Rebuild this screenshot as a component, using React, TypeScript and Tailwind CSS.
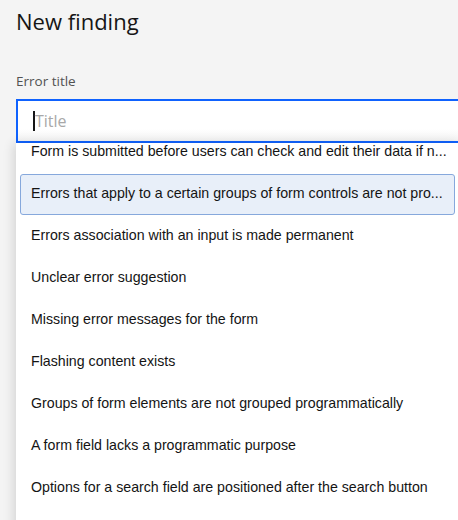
import React from "react";

const items = [
  "Form is submitted before users can check and edit their data if n...",
  "Errors that apply to a certain groups of form controls are not pro...",
  "Errors association with an input is made permanent",
  "Unclear error suggestion",
  "Missing error messages for the form",
  "Flashing content exists",
  "Groups of form elements are not grouped programmatically",
  "A form field lacks a programmatic purpose",
  "Options for a search field are positioned after the search button",
];

export default function App() {
  return (
    <div className="w-[458px] h-[520px] overflow-hidden bg-[#f4f4f4] relative">
      <div className="pl-4 pt-[7px]">
        <h1
          className="text-[22px] leading-[28px] text-[#161616] font-normal"
          style={{ fontFamily: '"Open Sans", "Noto Sans", sans-serif' }}
        >
          New finding
        </h1>
        <div
          className="mt-[37px] text-[13.5px] leading-[18px] text-[#525252]"
          style={{ fontFamily: '"Open Sans", "Noto Sans", sans-serif' }}
        >
          Error title
        </div>
        <div className="mt-[9px] w-[470px] h-[44px] border-2 border-[#0f62fe] bg-gradient-to-b from-white from-70% to-[#f3f3f3] flex items-center pl-[15px]">
          <span className="w-[1.5px] h-[20px] bg-[#161616]" />
          <span
            className="text-[16px] text-[#a8a8a8] ml-[0.5px]"
            style={{ fontFamily: '"Open Sans", "Noto Sans", sans-serif' }}
          >
            Title
          </span>
        </div>
        <div className="w-[443px] h-[400px] bg-white overflow-hidden shadow-[-3px_0_10px_rgba(0,0,0,0.12)]">
          <div className="-mt-[12px]">
            {items.map((t, i) => (
              <div key={i} className="h-[42px] flex items-center">
                <div
                  className={
                    "mx-1 h-[41px] w-full flex items-center pl-[10px] rounded-[3px] border " +
                    (i === 1
                      ? "bg-[#e8eff9] border-[#86a8dc]"
                      : "border-transparent")
                  }
                >
                  <span
                    className="text-[14.2px] text-[#141414] whitespace-nowrap"
                    style={{ fontFamily: '"Liberation Sans", Arial, sans-serif' }}
                  >
                    {t}
                  </span>
                </div>
              </div>
            ))}
          </div>
        </div>
      </div>
    </div>
  );
}
